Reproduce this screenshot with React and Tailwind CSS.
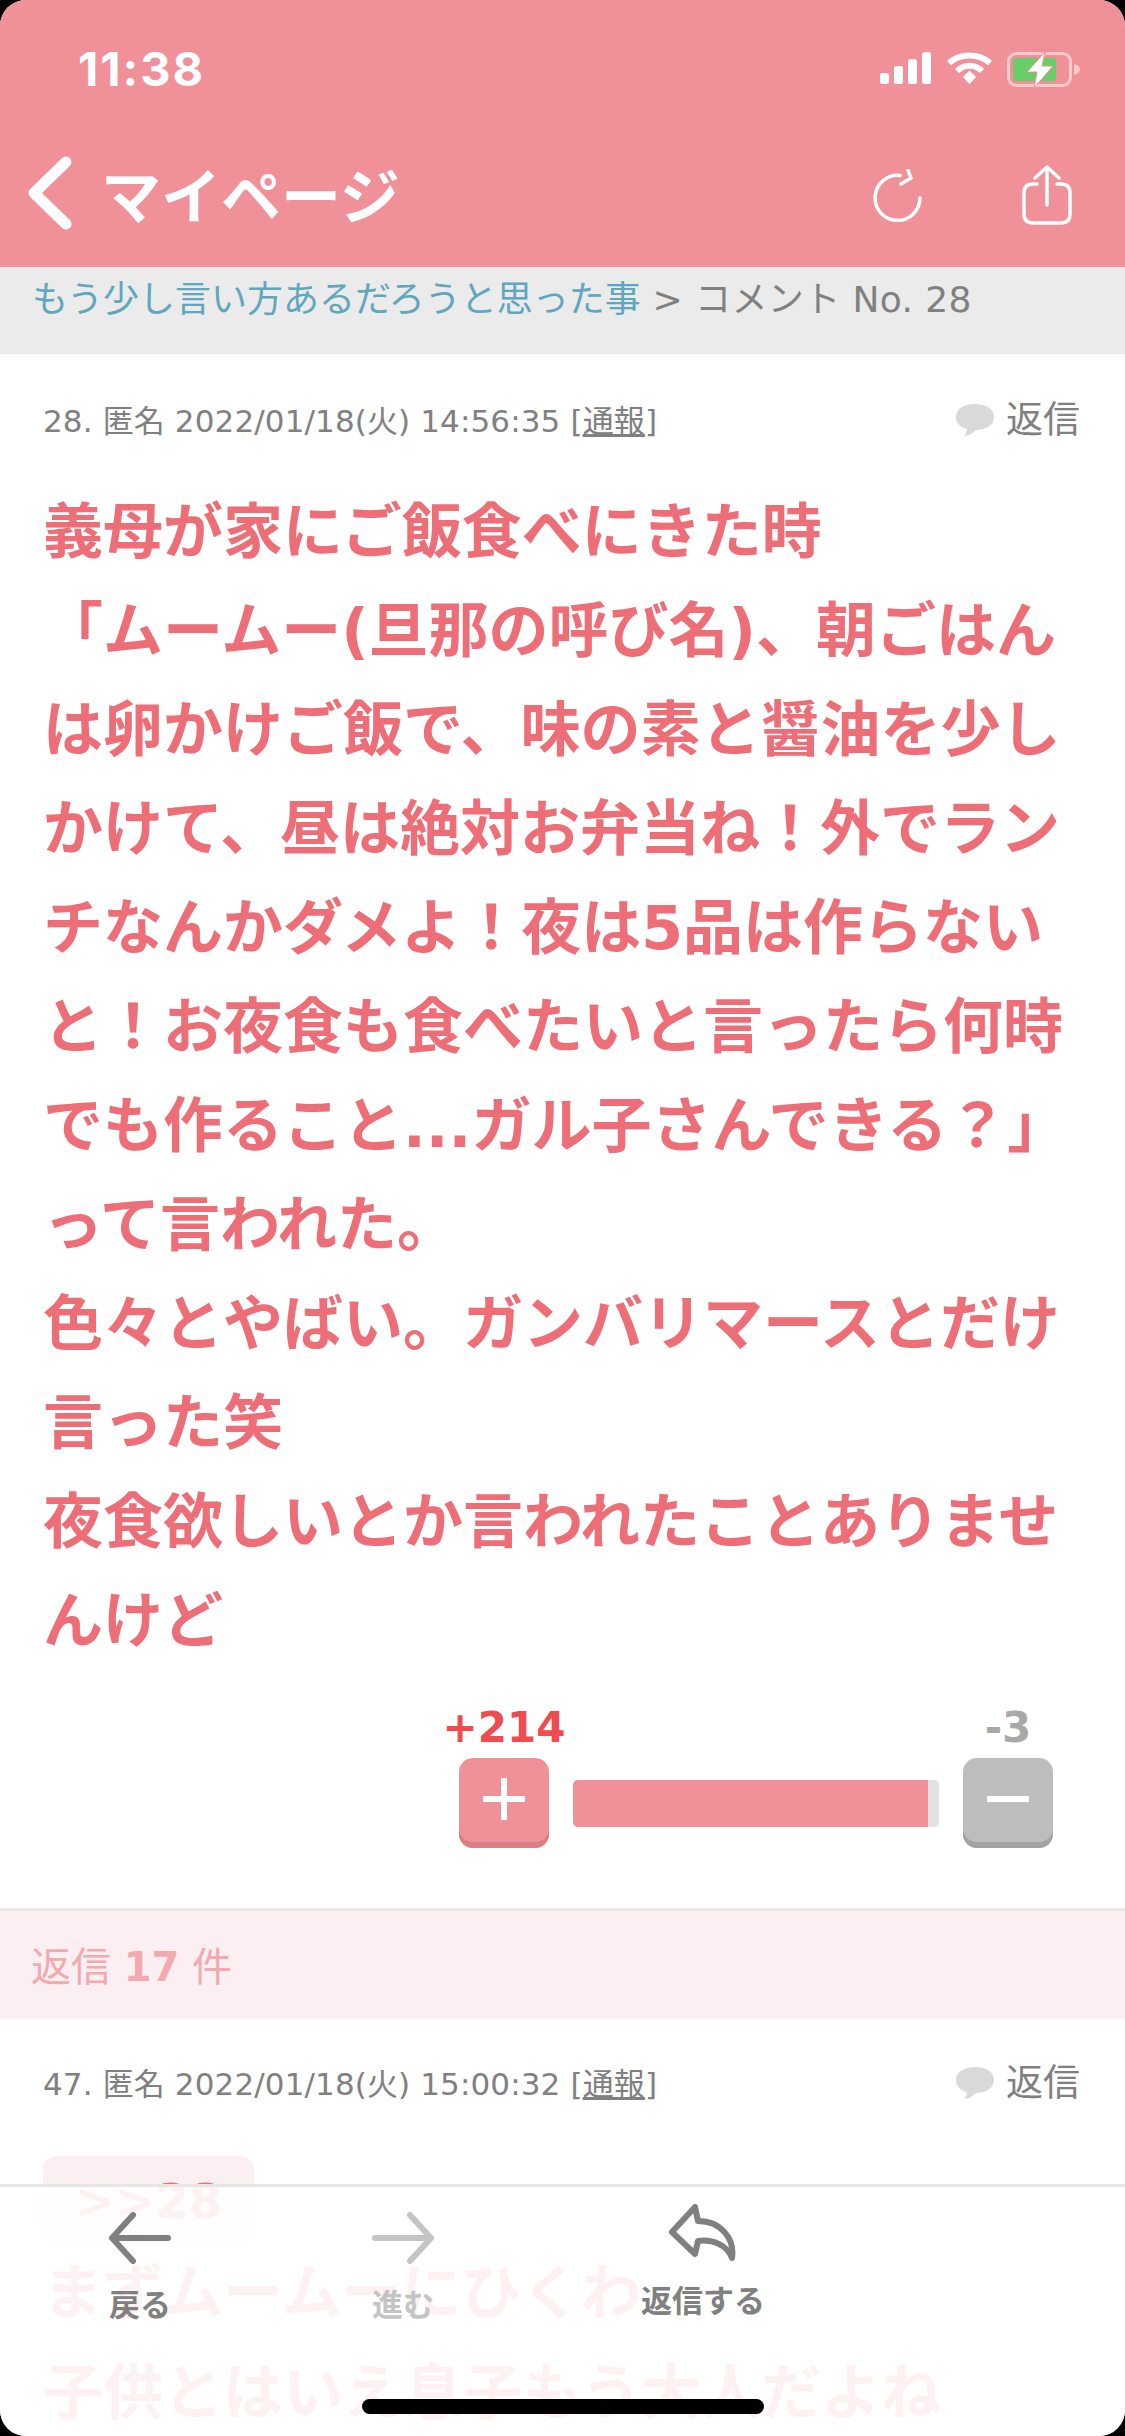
import React from 'react';

const jp = '"DejaVu Sans", "Noto Sans CJK JP", sans-serif';

const bodyLines = [
  '義母が家にご飯食べにきた時',
  '「ムームー(旦那の呼び名)、朝ごはん',
  'は卵かけご飯で、味の素と醤油を少し',
  'かけて、昼は絶対お弁当ね！外でラン',
  'チなんかダメよ！夜は5品は作らない',
  'と！お夜食も食べたいと言ったら何時',
  'でも作ること...ガル子さんできる？」',
  'って言われた。',
  '色々とやばい。ガンバリマースとだけ',
  '言った笑',
  '夜食欲しいとか言われたことありませ',
  'んけど',
];

function StatusIcons() {
  return (
    <div className="flex items-start">
      <svg width="52" height="32" viewBox="0 0 52 32" fill="white">
        <rect x="0" y="21" width="9" height="11" rx="2.5" />
        <rect x="14" y="14" width="9" height="18" rx="2.5" />
        <rect x="28" y="7" width="9" height="25" rx="2.5" />
        <rect x="42" y="0" width="9" height="32" rx="2.5" />
      </svg>
      <svg className="ml-[14px]" width="47" height="33" viewBox="0 0 47 33" fill="none" stroke="white">
        <path d="M3 11 C14 1 33 1 44 11" strokeWidth="6" />
        <path d="M11 19 C18 12 29 12 36 19" strokeWidth="6" />
        <path d="M17 25 L23.5 18.5 L30 25 L23.5 32 Z" fill="white" stroke="none" />
      </svg>
      <svg className="ml-[14px]" width="75" height="36" viewBox="0 0 75 36">
        <rect x="1.5" y="1.5" width="62" height="32" rx="8" fill="none" stroke="#f8c9cd" strokeWidth="3" />
        <rect x="6" y="6" width="43" height="23" rx="3" fill="#68ce67" />
        <path d="M67 12 C71 13 73 15 73 17.5 C73 20 71 22 67 23 Z" fill="#f8c9cd" />
        <path d="M38 0 L20 20 H30 L27 36 L46 14 H35 Z" fill="white" stroke="#f09199" strokeWidth="1" />
      </svg>
    </div>
  );
}

function Header() {
  return (
    <header className="bg-[#f09199] h-[267px] text-white">
      <div className="flex justify-between pt-[52px] pl-[78px] pr-[43px] h-[156px]">
        <span className="text-[47px] leading-[34px] font-bold tracking-[2px] font-['Inter']">11:38</span>
        <StatusIcons />
      </div>
      <div className="flex items-start justify-between pl-[27px] pr-[53px] h-[90px]">
        <div className="flex items-center">
          <svg width="46" height="74" viewBox="0 0 46 74" fill="none" stroke="white" strokeWidth="11" strokeLinecap="round" strokeLinejoin="round">
            <path d="M39 6 L7 37 L39 68" />
          </svg>
          <span className="ml-[28px] text-[60px] leading-none font-bold font-['Noto_Sans_CJK_JP']">マイページ</span>
        </div>
        <div className="flex items-start gap-[99px] pt-[9px]">
          <svg className="mt-[4px]" width="50" height="54" viewBox="0 0 50 54" fill="none" stroke="white" strokeWidth="3.5" strokeLinecap="round" strokeLinejoin="round">
            <path d="M47 29 A22.5 22.5 0 1 1 27 6.5" />
            <path d="M35 1 L38 9 L28 15" />
          </svg>
          <svg width="50" height="60" viewBox="0 0 50 60" fill="none" stroke="white" strokeWidth="3.5" strokeLinecap="round" strokeLinejoin="round">
            <path d="M15 19 H11 Q2 19 2 28 V49 Q2 58 11 58 H39 Q48 58 48 49 V28 Q48 19 39 19 H35" />
            <path d="M25 40 V2 M13 13 L25 2 L37 13" />
          </svg>
        </div>
      </div>
    </header>
  );
}

function MetaRow({ no, time }) {
  return (
    <div className="flex items-center justify-between pl-[43px] pr-[45px] text-[#808080]">
      <span className="text-[31px] leading-[40px] tracking-[0.12px]" style={{ fontFamily: jp }}>
        {no}. 匿名 2022/01/18(火) {time} [<span className="underline">通報</span>]
      </span>
      <span className="flex items-center">
        <svg width="40" height="36" viewBox="0 0 40 36" fill="#d9d9d9">
          <path d="M20 1 C31 1 39 6 39 14 C39 22 31 27 21 27 C18 30 13 33 9 33 C11 31 12 28 12 26 C5 24 1 20 1 14 C1 6 9 1 20 1 Z" />
        </svg>
        <span className="ml-[11px] text-[37px] leading-[40px]" style={{ fontFamily: jp }}>返信</span>
      </span>
    </div>
  );
}

function Votes() {
  return (
    <div className="flex justify-end pr-[72px] pt-[35px]">
      <div className="w-[594px]">
        <div className="flex justify-between text-[42px] leading-[44px] font-bold font-['DejaVu_Sans']">
          <span className="w-[90px] flex justify-center text-[#ef4b50] whitespace-nowrap">+214</span>
          <span className="w-[90px] flex justify-center text-[#a9a9a9]">-3</span>
        </div>
        <div className="flex items-start mt-[8px]">
          <button className="w-[90px] h-[90px] shrink-0 rounded-[14px] bg-[#f09199] shadow-[inset_0_-6px_0_#dc7e87] flex items-center justify-center pb-[8px]">
            <svg width="42" height="42" viewBox="0 0 42 42" fill="white">
              <rect x="18" y="0" width="6" height="42" />
              <rect x="0" y="18" width="42" height="6" />
            </svg>
          </button>
          <div className="flex-1 mx-[24px] mt-[22px] h-[47px] rounded-[5px] bg-[#e1e1e1] overflow-hidden">
            <div className="h-full bg-[#f09199] w-[97%]" />
          </div>
          <button className="w-[90px] h-[90px] shrink-0 rounded-[14px] bg-[#bdbdbd] shadow-[inset_0_-6px_0_#a3a3a3] flex items-center justify-center pb-[8px]">
            <div className="w-[42px] h-[6px] bg-white" />
          </button>
        </div>
      </div>
    </div>
  );
}

function BottomBar() {
  return (
    <div className="absolute left-0 right-0 bottom-0 h-[252px] bg-white/90 border-t-[3px] border-[#e6e6e6]">
      <div className="flex pl-[100px] text-center font-bold text-[31px] leading-[40px] font-['Noto_Sans_CJK_JP']">
        <div className="w-[80px] flex flex-col items-center pt-[25px] text-[#808080]">
          <svg width="64" height="52" viewBox="0 0 64 52" fill="none" stroke="#808080" strokeWidth="6" strokeLinecap="round" strokeLinejoin="round">
            <path d="M25 3 L4 26 L25 49 M4 26 H60" />
          </svg>
          <span className="mt-[19px] whitespace-nowrap">戻る</span>
        </div>
        <div className="w-[80px] ml-[183px] flex flex-col items-center pt-[25px] text-[#c4c4c4]">
          <svg width="64" height="52" viewBox="0 0 64 52" fill="none" stroke="#c4c4c4" strokeWidth="6" strokeLinecap="round" strokeLinejoin="round">
            <path d="M39 3 L60 26 L39 49 M60 26 H4" />
          </svg>
          <span className="mt-[19px] whitespace-nowrap">進む</span>
        </div>
        <div className="w-[120px] ml-[200px] flex flex-col items-center pt-[17px] text-[#808080]">
          <svg width="68" height="58" viewBox="0 0 68 58" fill="none" stroke="#808080" strokeWidth="6" strokeLinecap="round" strokeLinejoin="round">
            <path d="M26 3 L3 28 L26 50 L29 37 C44 35 58 41 63 54 C66 35 52 17 29 17 Z" />
          </svg>
          <span className="mt-[17px] whitespace-nowrap">返信する</span>
        </div>
      </div>
      <div className="absolute left-[362px] top-[212px] w-[402px] h-[15px] rounded-full bg-black" />
    </div>
  );
}

export default function App() {
  return (
    <div className="w-[1125px] h-[2436px] bg-black overflow-hidden">
      <div className="relative w-full h-full bg-white rounded-[26px] overflow-hidden">
        <Header />

        <div className="bg-[#ebebeb] h-[87px] pl-[32px] pt-[8px] text-[36px] leading-[50px] whitespace-nowrap" style={{ fontFamily: jp }}>
          <span className="text-[#5fa7bd]">もう少し言い方あるだろうと思った事</span>
          <span className="text-[#808080] tracking-[0.4px]"> &gt; コメント No. 28</span>
        </div>

        <div className="pt-[47px]">
          <MetaRow no="28" time="14:56:35" />
          <div className="mt-[42px] pl-[43px] text-[60px] leading-[99px] font-bold text-[#ee6e77] whitespace-nowrap" style={{ fontFamily: jp }}>
            {bodyLines.map((line, i) => (
              <div key={i}>{line}</div>
            ))}
          </div>
          <Votes />
        </div>

        <div className="mt-[60px] h-[111px] bg-[#fbeff1] border-t-[3px] border-[#e8e8e8] pl-[31px] text-[40px] leading-[112px] text-[#f4a9b0]" style={{ fontFamily: jp }}>
          返信 <span className="font-bold">17</span> 件
        </div>

        <div className="pt-[45px]">
          <MetaRow no="47" time="15:00:32" />
          <div className="ml-[43px] mt-[52px] w-[211px] h-[87px] rounded-[14px] bg-[#fbeff1] pl-[32px] text-[48px] leading-[90px] font-bold font-['DejaVu_Sans'] text-[#ee6e77]">
            &gt;&gt;28
          </div>
          <div className="pl-[43px] text-[60px] leading-[100px] font-bold text-[#ee6e77] whitespace-nowrap" style={{ fontFamily: jp }}>
            <div>まずムームーにひくわ</div>
            <div>子供とはいえ息子もう大人だよね</div>
          </div>
        </div>

        <BottomBar />
      </div>
    </div>
  );
}
